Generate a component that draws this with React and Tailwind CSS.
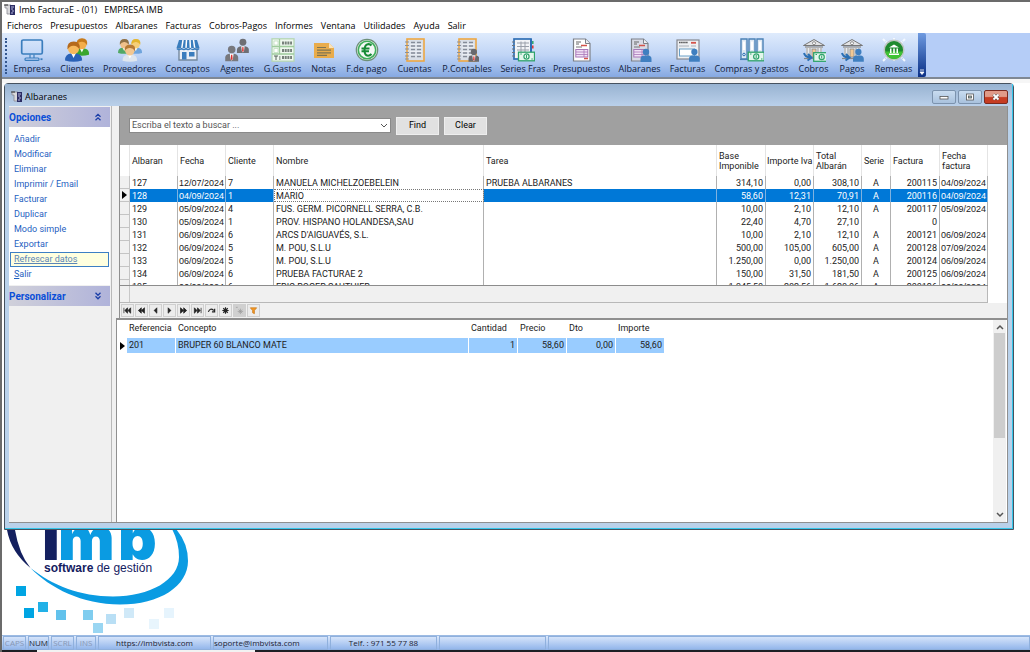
import React from "react";

const MENU = [
  "Ficheros", "Presupuestos", "Albaranes", "Facturas", "Cobros-Pagos",
  "Informes", "Ventana", "Utilidades", "Ayuda", "Salir",
];

const Person = ({ x = 0, y = 0, s = 1, fill = "#3f7fc0", tie }) => (
  <g transform={`translate(${x} ${y}) scale(${s})`}>
    <circle cx="5" cy="3" r="3.200" fill={fill} />
    <path d="M-.5 13V10Q-.5 7 3 6.600H7Q10.500 7 10.500 10V13Z" fill={fill} />
    {tie && <path d="M3.400 6.600H6.600L6 11L5 12.500L4 11Z" fill="#fff" />}
    {tie && <path d="M4.500 7.500H5.500L5.800 11L5 12L4.200 11Z" fill={tie} />}
  </g>
);

const Money = ({ x, y }) => (
  <g transform={`translate(${x} ${y})`}>
    <rect x=".7" y=".7" width="16" height="8.600" fill="#e4f6ec" stroke="#2fa36b" strokeWidth="1.300" />
    <circle cx="8.700" cy="5" r="2.600" fill="none" stroke="#2fa36b" strokeWidth="1.200" />
    <path d="M8.700 3.500V6.500M2.500 2.500H4M13.500 7.500H15" stroke="#2fa36b" />
  </g>
);

const Notebook = ({ edge }) => (
  <g>
    <rect x="4" y="1" width="17" height="22" fill="#d9dfe8" stroke={edge} strokeWidth="1.600" />
    <path d="M2 4H6M2 7.500H6M2 11H6M2 14.500H6M2 18H6M2 21H6" stroke="#8a8f98" strokeWidth="1" />
    <path d="M8 4.500H12M14 4.500H18M8 8H12M14 8H18M8 11.500H12M14 11.500H18M8 15H12M14 15H18M8 18.500H12M14 18.500H18" stroke="#858c98" strokeWidth="1.300" />
    <path d="M7 6.300H19M7 9.800H19M7 13.300H19M7 16.800H19" stroke="#f5f7fa" strokeWidth=".8" />
  </g>
);

const Document = ({ paper = "#fff" }) => (
  <g>
    <path d="M3.500 1H15.500L20 5.500V23H3.500Z" fill={paper} stroke="#7d8088" strokeWidth="1.200" />
    <path d="M15.500 1V5.500H20" fill="#eef0f4" stroke="#7d8088" />
    <path d="M6 4H11M6 6H9" stroke="#666" />
    <path d="M11 7.500H17M14 20.500H18" stroke="#d4534a" strokeWidth="1.300" />
    <path d="M6 9H12" stroke="#777" />
    <rect x="5.800" y="11.500" width="12" height="7.500" fill="#f0e2f5" stroke="#a877b8" />
    <path d="M6 14H18M6 16.500H18M14 11.500V19" stroke="#a877b8" strokeWidth=".8" />
  </g>
);

const Bank = () => (
  <g>
    <path d="M1.500 7.500L12 1.500L22.500 7.500Z" fill="#e2e3e5" stroke="#777" strokeWidth="1" />
    <circle cx="12" cy="5.200" r="1.500" fill="#fff" stroke="#777" strokeWidth=".8" />
    <path d="M4 9V19H20V9Z" fill="#e9ebee" />
    <path d="M3 9H21" stroke="#888" strokeWidth="1.200" />
    <path d="M5 10V19M8 10V19M16 10V19M19 10V19" stroke="#999" strokeWidth="1" />
    <rect x="10" y="11" width="4" height="8" fill="#f2c893" stroke="#888" strokeWidth=".8" />
    <path d="M2 20.500H22" stroke="#888" strokeWidth="1.200" />
    <path d="M2 15Q3 19 8 19.500M6 16L9.500 19.700L5.500 22.500" fill="none" stroke="#2b6fb3" strokeWidth="2" />
  </g>
);

const Bust = ({ x, y, s = 1, hair, skin, coat }) => (
  <g transform={`translate(${x} ${y}) scale(${s})`}>
    <path d="M0 15.500Q0 10.500 4.500 9.800H9.500Q14 10.500 14 15.500Q7 17.500 0 15.500Z" fill={coat} />
    <path d="M5 9.500L7 13.500L9 9.500Z" fill="#fff" />
    <ellipse cx="7" cy="5.500" rx="4.600" ry="5" fill={skin} />
    <path d="M2 6.500Q1.400 0 7.200 0Q13 0 12 6.500Q10 3.200 7 3.400Q4 3.200 2 6.500Z" fill={hair} />
  </g>
);

const ICONS = {
  empresa: (
    <g fill="none" stroke="#3a7dbd">
      <rect x="1.700" y="2" width="20.600" height="14" rx="1.500" strokeWidth="1.700" />
      <path d="M10 16.500V20M14 16.500V20" strokeWidth="1.200" />
      <rect x="5" y="20" width="14" height="2.400" rx="1" strokeWidth="1.200" />
      <path d="M20.500 21.200H22.500" strokeWidth="1.800" />
    </g>
  ),
  clientes: (
    <g>
      <Bust x={9.500} y={0.300} s={1.050} hair="#c77b1c" skin="#f3ae4a" coat="#39a62e" />
      <Bust x={0} y={3.500} s={1.220} hair="#b56a1c" skin="#f7b95c" coat="#2a62b8" />
    </g>
  ),
  proveedores: (
    <g>
      <Bust x={0} y={1} s={0.900} hair="#8f7146" skin="#f0c08a" coat="#52a865" />
      <Bust x={11.500} y={1} s={0.900} hair="#e3b52f" skin="#f5cf7a" coat="#6fa4dc" />
      <Bust x={4.500} y={6.500} s={1.050} hair="#b77a35" skin="#f3c790" coat="#dfe6ee" />
    </g>
  ),
  conceptos: (
    <g>
      <path d="M3 9V22H21V9" fill="#e9eff6" stroke="#74899e" strokeWidth="1.400" />
      <path d="M3 2H21L23.500 10H.5Z" fill="#3a7dbd" />
      <path d="M7 2L5.800 10M10.500 2L10 10M14 2L14.400 10M17.500 2L18.700 10" stroke="#fff" strokeWidth="1.500" />
      <path d="M.8 10.500Q3 12.500 5.500 10.500Q8 12.500 10 10.500Q12 12.500 14.300 10.500Q17 12.500 18.700 10.500Q21 12.500 23.200 10.500" fill="none" stroke="#3a7dbd" strokeWidth="1.300" />
      <rect x="6" y="14" width="4.500" height="7.500" fill="#3a7dbd" />
      <rect x="13" y="14" width="5.500" height="4.500" fill="#3a7dbd" />
    </g>
  ),
  agentes: (
    <g>
      <Person x={12.500} y={1} s={1.080} fill="#6e6f74" tie="#d33" />
      <Person x={0.800} y={8} s={1.180} fill="#77787d" tie="#d33" />
    </g>
  ),
  gastos: (
    <g>
      <rect x="1" y=".8" width="22" height="22.400" fill="#eef7ee" stroke="#b5d6b4" strokeWidth="1.300" />
      <path d="M8.500 1V16M1 8.500H23M1 16H23" stroke="#9fcc9d" strokeWidth="1.300" />
      <path d="M3 3H7V7H3ZM3 10.500H7V14.500H3Z" fill="#fff" stroke="#b9dcb7" strokeWidth=".7" />
      <path d="M11 5H21M11 12.500H21M11 19.500H21" stroke="#77807a" strokeWidth="3" strokeDasharray="2 .7" />
      <path d="M3 18H7M5 18V22M8 19H9.500M8 21H9.500" stroke="#55605a" />
    </g>
  ),
  notas: (
    <g>
      <path d="M2 5H17L22 10V20H2Z" fill="#e9ac4c" />
      <path d="M17 5L22 10H17Z" fill="#fbe3b8" />
      <path d="M5 9.500H14M5 12.200H19M5 14.900H19M5 17.300H15" stroke="#7f7452" strokeWidth="1.200" />
    </g>
  ),
  pago: (
    <g>
      <circle cx="12" cy="12" r="10.700" fill="#e3efe6" stroke="#6d8f78" strokeWidth="1.200" />
      <circle cx="12" cy="12" r="8.700" fill="#f3f8f4" stroke="#3fae5a" strokeWidth="1.600" />
      <path d="M16.500 7.500Q15 5.800 12.800 6.200Q9.500 7 9.500 12Q9.500 17.500 13 17.700Q15 17.700 16.500 16M6.500 10.500H14.500M6.500 13.300H14" fill="none" stroke="#168a35" strokeWidth="2" />
    </g>
  ),
  cuentas: <Notebook edge="#eda743" />,
  contables: (
    <g>
      <Notebook edge="#eda743" />
      <Person x={14} y={11} s={0.980} fill="#68696e" tie="#d33" />
    </g>
  ),
  series: (
    <g>
      <rect x="3" y="1" width="17" height="20" fill="#f2f4f7" stroke="#2f6fb5" strokeWidth="1.700" />
      <path d="M1 4H4M1 7.500H4M1 11H4M1 14.500H4M1 18H4" stroke="#6d7480" />
      <path d="M20 1V22" stroke="#2f6fb5" strokeWidth="2" />
      <path d="M21.800 3V6" stroke="#2fa36b" strokeWidth="1.500" />
      <path d="M21.800 7.500V10.500" stroke="#d33" strokeWidth="1.500" />
      <path d="M6 5H18M6 8.500H18M6 12H18M10 3.500V14M14 3.500V14" stroke="#9aa0aa" />
      <Money x={6.800} y={13.500} />
    </g>
  ),
  presupuestos: <Document />,
  albaranes: (
    <g>
      <Document paper="#d8dbe6" />
      <Person x={13} y={11} s={1} />
    </g>
  ),
  facturas: (
    <g>
      <rect x="1" y="2" width="22" height="19" fill="#eef0f3" stroke="#85888f" strokeWidth="1.200" />
      <path d="M3 4.500H12" stroke="#555" strokeWidth="1.600" strokeDasharray="1.600 .5" />
      <path d="M15 4.800H20" stroke="#d4534a" strokeWidth="1.800" />
      <path d="M3 8H13M15 8H20" stroke="#aab0b8" />
      <rect x="3.500" y="11" width="15" height="7" fill="#fff" stroke="#6aa0c8" />
      <Person x={13.500} y={11} s={0.980} />
    </g>
  ),
  compras: (
    <g>
      <path d="M1 1H7V21H1ZM9 1H15V21H9ZM17 1H23V21H17Z" fill="#dfe9f4" stroke="#4a80b5" strokeWidth="1.400" />
      <path d="M4 3.500V12M12 3.500V12M20 3.500V12" stroke="#fff" strokeWidth="2" />
      <circle cx="4" cy="16.500" r="1.300" fill="none" stroke="#2b6fb3" />
      <path d="M0 21.500H24" stroke="#4a80b5" strokeWidth="1.200" />
      <Money x={7.500} y={13.500} />
    </g>
  ),
  cobros: (
    <g>
      <Bank />
      <Money x={11} y={14} />
    </g>
  ),
  pagos: (
    <g>
      <Bank />
      <Person x={13.500} y={11} s={0.980} />
    </g>
  ),
  remesas: (
    <g>
      <path d="M1 1L23 23M23 1L1 23M12 0V24" stroke="#f4f9ff" strokeWidth="2" strokeDasharray="3 1" />
      <circle cx="12" cy="12" r="10.500" fill="#bfc6c2" />
      <circle cx="12" cy="12" r="9" fill="#1f8a2f" />
      <path d="M3.200 13.500A8.900 8.900 0 0 0 20.800 13.500Z" fill="#3fc235" />
      <path d="M7 9.500L12 6.500L17 9.500ZM8 10.500H9.500V15H8ZM11.200 10.500H12.800V15H11.200ZM14.500 10.500H16V15H14.500ZM7 15.500H17V17H7Z" fill="#fff" />
    </g>
  ),
};

const TOOLS = [
  ["Empresa", "empresa", "w-[34px]"],
  ["Clientes", "clientes", "w-[32px]"],
  ["Proveedores", "proveedores", "w-[49px]"],
  ["Conceptos", "conceptos", "w-[43px]"],
  ["Agentes", "agentes", "w-[32px]"],
  ["G.Gastos", "gastos", "w-[35px]"],
  ["Notas", "notas", "w-[23px]"],
  ["F.de pago", "pago", "w-[39px]"],
  ["Cuentas", "cuentas", "w-[33px]"],
  ["P.Contables", "contables", "w-[48px]"],
  ["Series Fras", "series", "w-[40px]"],
  ["Presupuestos", "presupuestos", "w-[53px]"],
  ["Albaranes", "albaranes", "w-[39px]"],
  ["Facturas", "facturas", "w-[33px]"],
  ["Compras y gastos", "compras", "w-[71px]"],
  ["Cobros", "cobros", "w-[29px]"],
  ["Pagos", "pagos", "w-[24px]"],
  ["Remesas", "remesas", "w-[35px]"],
];

const AppIcon = () => (
  <svg viewBox="0 0 12 12" className="size-3 shrink-0" aria-hidden="true">
    <path d="M1 1H7V10H3V4H1Z" fill="#d9d9dc" stroke="#8b8b92" strokeWidth=".8" />
    <path d="M6 1H11V11H6Z" fill="#2b2c63" />
    <path d="M7 3H10M7 5H9M8 7H10M7 9H9" stroke="#c6c8ee" strokeWidth=".9" />
    <path d="M0 1H4" stroke="#333" />
  </svg>
);

const ACTIONS = [
  "Añadir", "Modificar", "Eliminar", "Imprimir / Email", "Facturar",
  "Duplicar", "Modo simple", "Exportar", "Refrescar datos", "Salir",
];

const COLUMNS = [
  ["Albaran", "w-[48px]"],
  ["Fecha", "w-[48px]"],
  ["Cliente", "w-[48px]"],
  ["Nombre", "w-[210px]"],
  ["Tarea", ""],
  ["Base Imponible", "w-[49px]"],
  ["Importe Iva", "w-[48px]"],
  ["Total Albarán", "w-[48px]"],
  ["Serie", "w-[29px]"],
  ["Factura", "w-[49px]"],
  ["Fecha factura", "w-[48px]"],
];

const ROWS = [
  ["127", "12/07/2024", "7", "MANUELA MICHELZOEBELEIN", "PRUEBA ALBARANES", "314,10", "0,00", "308,10", "A", "200115", "04/09/2024"],
  ["128", "04/09/2024", "1", "MARIO", "", "58,60", "12,31", "70,91", "A", "200116", "04/09/2024"],
  ["129", "05/09/2024", "4", "FUS. GERM. PICORNELL SERRA, C.B.", "", "10,00", "2,10", "12,10", "A", "200117", "05/09/2024"],
  ["130", "05/09/2024", "1", "PROV. HISPANO HOLANDESA,SAU", "", "22,40", "4,70", "27,10", "", "0", ""],
  ["131", "06/09/2024", "6", "ARCS D'AIGUAVÉS, S.L.", "", "10,00", "2,10", "12,10", "A", "200121", "06/09/2024"],
  ["132", "06/09/2024", "5", "M. POU, S.L.U", "", "500,00", "105,00", "605,00", "A", "200128", "07/09/2024"],
  ["133", "06/09/2024", "5", "M. POU, S.L.U", "", "1.250,00", "0,00", "1.250,00", "A", "200124", "06/09/2024"],
  ["134", "06/09/2024", "6", "PRUEBA FACTURAE 2", "", "150,00", "31,50", "181,50", "A", "200125", "06/09/2024"],
  ["135", "06/09/2024", "6", "ERIC ROGER SAUTHIER", "", "1.345,50", "282,56", "1.628,06", "A", "200126", "06/09/2024"],
];
const RIGHT = [5, 6, 7, 9];
const DATES = [1, 10];

const NAV = [
  ["Primero", <path key="p" d="M1 2V8M2 5L5 2V8ZM5.500 5L8.500 2V8Z" />],
  ["Página anterior", <path key="p" d="M1.500 5L4.800 2V8ZM5 5L8.300 2V8Z" />],
  ["Anterior", <path key="p" d="M3.500 5L6.500 2V8Z" />],
  ["Siguiente", <path key="p" d="M6.500 5L3.500 2V8Z" />],
  ["Página siguiente", <path key="p" d="M5 5L1.700 2V8ZM8.500 5L5.200 2V8Z" />],
  ["Último", <path key="p" d="M9 2V8M8 5L5 2V8ZM4.500 5L1.500 2V8Z" />],
  ["Refrescar", <path key="p" fill="none" d="M1.500 6.500Q3.500 1.500 7.500 5M8.500 3V6.500H5.500" />],
  ["Marcar", <path key="p" d="M5 1.500V8.500M1.500 5H8.500M2.500 2.500L7.500 7.500M7.500 2.500L2.500 7.500" />],
  ["Ir a marca", <path key="p" d="M6 3V9M3 6H9M4 4L8 8M8 4L4 8M1 1.500H3" />],
  ["Filtrar", <path key="p" d="M1.500 2H8.500L6 5V8.500L4 7.500V5Z" />],
];

function Pointer() {
  return (
    <svg viewBox="0 0 5 8" className="mx-auto h-2 w-[5px]" aria-hidden="true">
      <path d="M0 0L5 4L0 8Z" fill="#000" />
    </svg>
  );
}

function PanelHeader({ title, up }) {
  return (
    <button type="button" className="flex h-5 w-full items-center justify-between bg-linear-to-r from-[#d0d0da] to-[#b0b3da] pr-2 text-[10px] font-bold text-[#0a4fd8]">
      <span>{title}</span>
      <svg viewBox="0 0 8 8" className="size-2" fill="none" stroke="#1c3fa8" strokeWidth="1.300" aria-hidden="true">
        {up ? <path d="M1.500 3.800L4 1.300L6.500 3.800M1.500 7.300L4 4.800L6.500 7.300" /> : <path d="M1.500 .8L4 3.300L6.500 .8M1.500 4.300L4 6.800L6.500 4.300" />}
      </svg>
    </button>
  );
}

function Sidebar() {
  return (
    <aside className="w-[103px] shrink-0 border-r border-[#b8b8b8] bg-[#f0f0f0] pt-px pr-px">
      <PanelHeader title="Opciones" up />
      <ul className="mb-px bg-white pt-[5px] pb-[3px] pl-px">
        {ACTIONS.map((a) => (
          <li key={a} className="flex">
            {a === "Refrescar datos" ? (
              <a href="#refrescar" className="mr-px h-[15px] flex-1 border border-[#3d7fc4] bg-[#ffffdf] px-[3px] leading-[13px] text-[#5b86b8] underline">{a}</a>
            ) : (
              <a href={"#" + a} className="h-[15px] px-1 leading-[15px] text-[#1f5fbf]">
                {a === "Salir" ? <><span className="underline">S</span>alir</> : a}
              </a>
            )}
          </li>
        ))}
      </ul>
      <PanelHeader title="Personalizar" />
    </aside>
  );
}

function cellClass(r, c) {
  const sel = r === 1;
  let k = "h-[13px] border-r py-0 leading-[12px] whitespace-nowrap ";
  if (DATES.includes(c)) k += "px-px font-['Liberation_Sans',sans-serif] ";
  else k += "px-[2px] ";
  if (RIGHT.includes(c)) k += "text-right ";
  if (c === 8) k += "text-center ";
  if (sel && c === 3) k += "border-[#b0b0b0] bg-white text-[#222] outline-1 -outline-offset-1 outline-dotted outline-[#777] ";
  else if (sel) k += "border-[#7fb2e0] bg-[#0078d7] text-white ";
  else k += "border-[#b0b0b0] ";
  return k;
}

function Grid() {
  return (
    <div className="bg-white pr-[19px]">
      <div className="h-[141px] overflow-hidden border-b border-[#8c8c8c]">
        <table className="w-full table-fixed border-separate border-spacing-0 text-[#222]">
          <colgroup>
            <col className="w-[10px]" />
            {COLUMNS.map(([n, w]) => <col key={n} className={w} />)}
          </colgroup>
          <thead>
            <tr className="h-[31px]">
              <th className="border-r border-[#e4e4e4] p-0"><span className="sr-only">Fila</span></th>
              {COLUMNS.map(([n], i) => (
                <th key={n} className={"border-r border-[#e4e4e4] py-0 text-left leading-[10px] font-normal " + (i === 6 ? "px-px whitespace-nowrap" : "px-[2px]")}>{n}</th>
              ))}
            </tr>
          </thead>
          <tbody>
            {ROWS.map((row, r) => (
              <tr key={row[0]}>
                <td className="h-[13px] border-r border-b border-[#c4c4c4] bg-[#f0f0f0] p-0">{r === 1 && <Pointer />}</td>
                {row.map((v, c) => <td key={c} className={cellClass(r, c)}>{v}</td>)}
              </tr>
            ))}
          </tbody>
        </table>
      </div>
      <div className="flex h-[17px] border-r border-b border-[#b8b8b8] bg-[#f0f0f0]">
        <div className="w-[10px] border-r border-[#c8c8c8]" />
      </div>
    </div>
  );
}

function Detail() {
  const cols = [["Referencia", "w-[49px]"], ["Concepto", "w-[293px]"], ["Cantidad", "w-[49px]"], ["Precio", "w-[49px]"], ["Dto", "w-[49px]"], ["Importe", "w-[49px]"]];
  const vals = ["201", "BRUPER 60 BLANCO MATE", "1", "58,60", "0,00", "58,60"];
  return (
    <div className="flex min-h-[204px] border-t-2 border-l border-[#8f8f8f] bg-white">
      <div className="flex-1">
        <table className="table-fixed border-separate border-spacing-0 text-[#222]">
          <colgroup>
            <col className="w-[10px]" />
            {cols.map(([n, w]) => <col key={n} className={w} />)}
          </colgroup>
          <thead>
            <tr className="h-[18px]">
              <th className="p-0"><span className="sr-only">Fila</span></th>
              {cols.map(([n]) => <th key={n} className="px-[2px] py-0 text-left font-normal">{n}</th>)}
            </tr>
          </thead>
          <tbody>
            <tr className="h-[15px]">
              <td className="p-0"><Pointer /></td>
              {vals.map((v, i) => (
                <td key={i} className={"border-r border-white bg-[#99ccff] px-[2px] py-0 leading-[15px] " + (i > 1 ? "text-right" : "")}>{v}</td>
              ))}
            </tr>
          </tbody>
        </table>
      </div>
      <div className="mr-px flex w-[13px] flex-col items-center justify-between bg-[#f0f0f0] py-1" aria-hidden="true">
        <svg viewBox="0 0 8 6" className="h-[6px] w-2" fill="none" stroke="#555" strokeWidth="1.500"><path d="M1 5L4 2L7 5" /></svg>
        <div className="mt-[3px] mb-auto h-[105px] w-[11px] bg-[#cdcdcd]" />
        <svg viewBox="0 0 8 6" className="h-[6px] w-2" fill="none" stroke="#555" strokeWidth="1.500"><path d="M1 1L4 4L7 1" /></svg>
      </div>
    </div>
  );
}

function ChildWindow() {
  const box = "flex h-[14px] w-6 items-center justify-center rounded-[2px] border";
  return (
    <section className="mr-4 ml-[2px] rounded-t border border-[#46525f] bg-[#b9d1ea] font-['Roboto','Liberation_Sans',sans-serif] text-[9px]">
      <div className="border-r border-b border-[#35c6ea] px-1 pb-[5px]">
        <header className="-mx-1 flex h-[22px] items-center gap-[2px] bg-linear-to-b from-[#98b3d1] to-[#bad0ea] px-1 pt-1">
          <div className="ml-[2px] flex flex-1 items-center gap-[2px] font-['Open_Sans',sans-serif] text-black">
            <AppIcon />
            <h1>Albaranes</h1>
          </div>
          <button type="button" aria-label="Minimizar" className={box + " border-[#7c93ae] bg-linear-to-b from-[#c9dcf0] to-[#a9c2de]"}>
            <svg viewBox="0 0 10 8" className="h-2 w-[10px]"><rect x="1" y="3.500" width="8" height="2.500" fill="#fff" stroke="#555" strokeWidth=".8" /></svg>
          </button>
          <button type="button" aria-label="Maximizar" className={box + " border-[#7c93ae] bg-linear-to-b from-[#c9dcf0] to-[#a9c2de]"}>
            <svg viewBox="0 0 10 8" className="h-2 w-[10px]"><rect x="1.500" y="1" width="7" height="6" fill="#fff" stroke="#555" strokeWidth=".8" /><rect x="3.500" y="3" width="3" height="2" fill="#9bb" stroke="#555" strokeWidth=".8" /></svg>
          </button>
          <button type="button" aria-label="Cerrar" className={box + " border-[#7a2a20] bg-linear-to-b from-[#e09a88] from-45% to-[#c63c22] to-55%"}>
            <svg viewBox="0 0 10 8" className="h-2 w-[10px]"><path d="M2.500 1.500L7.500 6.500M7.500 1.500L2.500 6.500" stroke="#555" strokeWidth="3" /><path d="M2.500 1.500L7.500 6.500M7.500 1.500L2.500 6.500" stroke="#fff" strokeWidth="1.800" /></svg>
          </button>
        </header>
        <div className="flex border-r border-b border-[#8f8f8f] bg-[#f0f0f0]">
          <Sidebar />
          <div className="flex min-w-0 flex-1 flex-col pl-1">
            <div className="ml-[3px] border-l border-[#8f8f8f]">
              <form className="flex h-[39px] items-center gap-[5px] bg-[#a0a0a0] pl-[9px]" onSubmit={(e) => e.preventDefault()}>
                <div className="flex h-[15px] w-[262px] items-center border border-[#8a8a8a] bg-white">
                  <input aria-label="Texto a buscar" placeholder="Escriba el texto a buscar ..." className="h-[13px] min-w-0 flex-1 px-[2px] outline-none placeholder:text-[#555]" />
                  <button type="button" aria-label="Desplegar" className="px-[2px]">
                    <svg viewBox="0 0 8 6" className="h-[6px] w-2" fill="none" stroke="#555"><path d="M1 1L4 4L7 1" /></svg>
                  </button>
                </div>
                <button type="submit" className="h-[18px] w-[43px] border border-[#eee] bg-[#e1e1e1]">Find</button>
                <button type="reset" className="h-[18px] w-[43px] border border-[#eee] bg-[#e1e1e1]">Clear</button>
              </form>
              <Grid />
              <div className="flex h-[15px] items-center gap-px pl-px">
                {NAV.map(([label, d], i) => (
                  <button key={label} type="button" aria-label={label} className={"flex h-[13px] w-[13px] items-center justify-center border border-[#cfcfcf] " + (i === 8 ? "bg-[#d0d0d0]" : "bg-[#ececec]")}>
                    <svg viewBox="0 0 10 10" className="size-[9px] shrink-0" fill={i === 9 ? "#f59a23" : "#222"} stroke={i === 9 ? "#c8781a" : i === 8 ? "#999" : "#222"} strokeWidth={i === 7 || i === 6 ? 1.3 : 0.8}>{d}</svg>
                  </button>
                ))}
              </div>
            </div>
            <Detail />
          </div>
        </div>
      </div>
    </section>
  );
}

const SQUARES = [
  [16, 56, "#00a5e3"], [38, 72, "#22b1e7"], [24, 78, "#00a5e3"], [56, 80, "#62c2ec"], [83, 80, "#80cdef"],
  [106, 84, "#b9dff5"], [124, 78, "#d0e9f8"], [93, 93, "#9ad6f2"], [149, 89, "#e8f5fd"], [164, 78, "#e6f4fd"],
];

function Logo() {
  return (
    <svg viewBox="2 0 190 104" className="h-[104px] w-[190px]" role="img" aria-label="imb software de gestión">
      <path d="M7 0Q11 22 30.500 38Q19 24 15 0Z" fill="#14205f" />
      <path d="M30.500 38C50 58 82 74.500 120 74.500C160 74.500 188 56 188 31Q188 13 176 -1H172Q179 12 179 27C179 50 150 66.500 113 66.500C80 66.500 52 55 30.500 38Z" fill="#0a9be2" />
      <g fontFamily="Inter, sans-serif" fontWeight="900" fontSize="60">
        <text x="42" y="30" fill="#14205f">i</text>
        <text x="58" y="30" fill="#0a9be2">m</text>
        <text x="118" y="30" fill="#0a9be2">b</text>
      </g>
      <text x="44" y="42" fill="#14205f" fontFamily="Liberation Sans, sans-serif" fontSize="12"><tspan fontWeight="bold">software</tspan> de gestión</text>
      {SQUARES.map(([x, y, c]) => <rect key={x + "-" + y} x={x} y={y} width="10" height="10" fill={c} />)}
    </svg>
  );
}

function StatusBar() {
  const cell = "flex items-center border border-[#8fb0dd] whitespace-nowrap ";
  return (
    <footer className="flex h-[15px] gap-[2px] border-t border-[#9dbbe3] bg-linear-to-b from-[#dbe8fb] to-[#8fb3ea] pl-px text-[8px] text-[#1c2333]">
      <span className={cell + "w-[23px] justify-center text-[#8797b5]"}>CAPS</span>
      <span className={cell + "w-[21px] justify-center"}>NUM</span>
      <span className={cell + "w-[23px] justify-center text-[#8797b5]"}>SCRL</span>
      <span className={cell + "w-[20px] justify-center text-[#8797b5]"}>INS</span>
      <a href="https://imbvista.com" className={cell + "w-[113px] justify-center"}>https://imbvista.com</a>
      <a href="mailto:soporte@imbvista.com" className={cell + "w-[115px]"}>soporte@imbvista.com</a>
      <span className={cell + "w-[107px] justify-center"}>Telf. : 971 55 77 88</span>
      <span className={cell + "w-[107px]"} />
      <span className={cell + "flex-1"} />
    </footer>
  );
}

export default function App() {
  return (
    <div className="flex min-h-screen flex-col border-t-2 border-l-2 border-[#6b6b6b] bg-white font-['Open_Sans',sans-serif]">
      <header className="flex h-4 items-center gap-[3px] pl-[2px] text-[9px] text-black">
        <AppIcon />
        <span className="whitespace-pre">Imb FacturaE - (01)   EMPRESA IMB</span>
      </header>
      <nav className="flex h-[15px] items-center gap-2 pt-px pl-[5px] text-[9px] text-black">
        {MENU.map((m) => <button key={m} type="button">{m}</button>)}
      </nav>
      <div className="flex h-[46px] border-b-2 border-[#7f8894] bg-[#b5cdf7]">
        <div className="flex gap-3 bg-linear-to-b from-[#dfebfc] via-[#c0d5f6] to-[#86a9e2] pt-[5px] pr-[7px] pl-[3px]">
          <div className="-mr-[4px] h-[36px] w-0 border-l-2 border-dotted border-[#34578f]" />
          {TOOLS.map(([label, icon, w]) => (
            <button key={label} type="button" className={"flex flex-col items-center text-[9px] text-[#10203c] " + w}>
              <svg viewBox="0 0 24 24" className="size-6 shrink-0" aria-hidden="true">{ICONS[icon]}</svg>
              <span className="leading-[14px] whitespace-nowrap">{label}</span>
            </button>
          ))}
        </div>
        <button type="button" aria-label="Más botones" className="flex w-2 items-end justify-center rounded-r-[2px] bg-linear-to-b from-[#6f9ae0] to-[#0b2f86] pb-[2px]">
          <svg viewBox="0 0 6 6" className="size-[6px]" aria-hidden="true"><path d="M1 1H5M1 3H5L3 5.500Z" fill="#fff" stroke="#fff" strokeWidth=".8" /></svg>
        </button>
      </div>
      <div className="h-1 bg-[#f6f6f6]" />
      <main className="flex-1">
        <ChildWindow />
        <Logo />
      </main>
      <StatusBar />
      <div className="flex h-[2px] bg-[#1d1f24]">
        <div className="ml-[35px] w-[218px] bg-[#f2f2f2]" />
      </div>
    </div>
  );
}
